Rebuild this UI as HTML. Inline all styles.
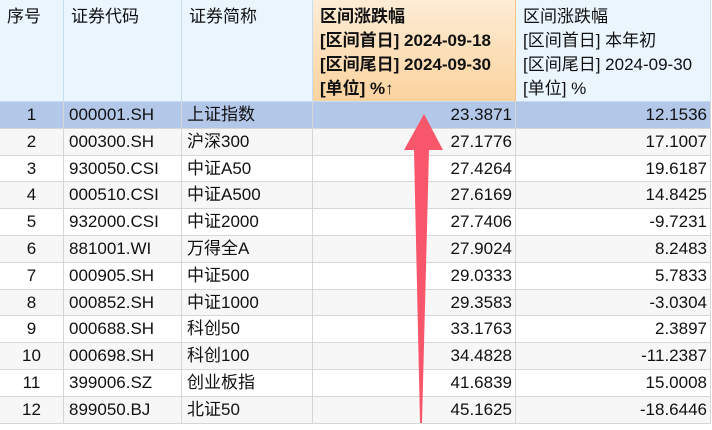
<!DOCTYPE html>
<html><head><meta charset="utf-8"><style>
*{margin:0;padding:0;box-sizing:border-box}
body{width:712px;height:430px;background:#fff;font-family:"Liberation Sans","Noto Sans CJK SC",sans-serif;font-size:17px;color:#111;position:relative;overflow:hidden}
.hd{position:absolute;top:0;height:102px;background:#eaf5fe;border-right:1px solid #c6dcf0;border-bottom:1px solid #c6dcf0;padding:5px 0 0 7px;line-height:24px;white-space:nowrap}
.row{position:absolute;left:0;width:711px;border-bottom:1px solid #d6d6d6}
.cell{position:absolute;top:0;height:100%;border-right:1px solid #d6d6d6;line-height:26px;padding:0 5px;white-space:nowrap}
</style></head><body>
<div class="hd" style="left:0;width:64px">序号</div>
<div class="hd" style="left:64px;width:118px">证券代码</div>
<div class="hd" style="left:182px;width:131px">证券简称</div>
<div class="hd" style="left:313px;width:203px;background:linear-gradient(#fdecd6,#fbd39e);border-right:1px solid #f5c38a;font-weight:bold">区间涨跌幅<br>[区间首日] 2024-09-18<br>[区间尾日] 2024-09-30<br><span>[单位] %↑</span></div>
<div class="hd" style="left:516px;width:195px">区间涨跌幅<br>[区间首日] 本年初<br>[区间尾日] 2024-09-30<br>[单位] %</div>
<div id="rows"></div>
<script>
var d=[["1","000001.SH","上证指数","23.3871","12.1536"],["2","000300.SH","沪深300","27.1776","17.1007"],["3","930050.CSI","中证A50","27.4264","19.6187"],["4","000510.CSI","中证A500","27.6169","14.8425"],["5","932000.CSI","中证2000","27.7406","-9.7231"],["6","881001.WI","万得全A","27.9024","8.2483"],["7","000905.SH","中证500","29.0333","5.7833"],["8","000852.SH","中证1000","29.3583","-3.0304"],["9","000688.SH","科创50","33.1763","2.3897"],["10","000698.SH","科创100","34.4828","-11.2387"],["11","399006.SZ","创业板指","41.6839","15.0008"],["12","899050.BJ","北证50","45.1625","-18.6446"]];
var h="";for(var i=0;i<12;i++){var t=102+i*26.8;var bg=i==0?"#b3c7e8":(i%2?"#f7f7f7":"#fff");var r=d[i];
h+='<div class="row" style="top:'+t+'px;height:26.8px;background:'+bg+'">'+
'<div class="cell" style="left:0;width:64px;text-align:center">'+r[0]+'</div>'+
'<div class="cell" style="left:64px;width:118px">'+r[1]+'</div>'+
'<div class="cell" style="left:182px;width:131px">'+r[2]+'</div>'+
'<div class="cell" style="left:313px;width:203px;text-align:right;padding-right:3px">'+r[3]+'</div>'+
'<div class="cell" style="left:516px;width:195px;text-align:right;padding-right:3px">'+r[4]+'</div></div>';}
document.getElementById("rows").innerHTML=h;
</script>
<svg style="position:absolute;left:0;top:0" width="712" height="430"><polygon points="424,114 443,150 429,150 422,423 420,423 414,150 404,150" fill="#f8566b"/></svg>
</body></html>
